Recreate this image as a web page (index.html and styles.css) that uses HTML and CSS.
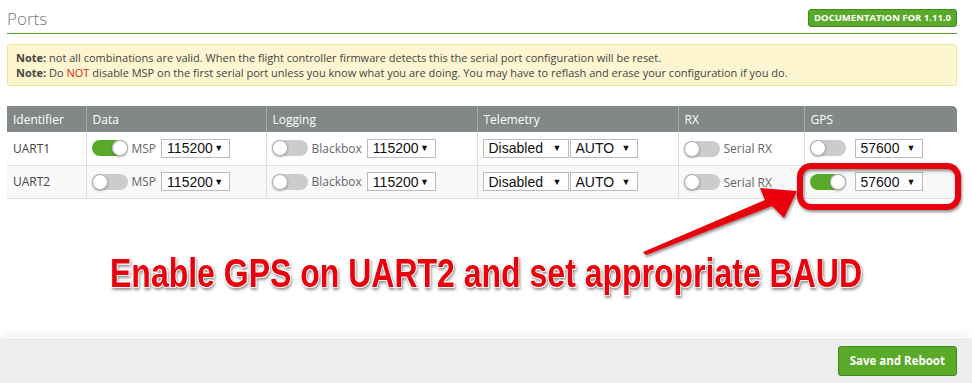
FILE: index.html
```html
<!DOCTYPE html>
<html lang="en">
<head>
  <meta charset="UTF-8">
  <title>Ports</title>
  <link rel="stylesheet" href="styles.css">
</head>
<body>
  <div class="content">
    <div class="tab-header">
      <h2>Ports</h2>
      <a class="doc-btn" href="#">Documentation for 1.11.0</a>
    </div>

    <div class="note">
      <p><b>Note:</b> not all combinations are valid. When the flight controller firmware detects this the serial port configuration will be reset.</p>
      <p><b>Note:</b> Do <span class="red">NOT</span> disable MSP on the first serial port unless you know what you are doing. You may have to reflash and erase your configuration if you do.</p>
    </div>

    <table class="ports">
      <thead>
        <tr>
          <th class="c-id">Identifier</th>
          <th class="c-data">Data</th>
          <th class="c-log">Logging</th>
          <th class="c-tel">Telemetry</th>
          <th class="c-rx">RX</th>
          <th class="c-gps">GPS</th>
        </tr>
      </thead>
      <tbody>
        <tr>
          <td>UART1</td>
          <td><span class="toggle on"></span><span class="lbl">MSP</span><span class="sel w69">115200</span></td>
          <td><span class="toggle"></span><span class="lbl">Blackbox</span><span class="sel w69">115200</span></td>
          <td><span class="sel w86">Disabled</span><span class="sel w68">AUTO</span></td>
          <td><span class="toggle"></span><span class="lbl">Serial RX</span></td>
          <td><span class="toggle"></span><span class="sel w68 gap">57600</span></td>
        </tr>
        <tr>
          <td>UART2</td>
          <td><span class="toggle"></span><span class="lbl">MSP</span><span class="sel w69">115200</span></td>
          <td><span class="toggle"></span><span class="lbl">Blackbox</span><span class="sel w69">115200</span></td>
          <td><span class="sel w86">Disabled</span><span class="sel w68">AUTO</span></td>
          <td><span class="toggle"></span><span class="lbl">Serial RX</span></td>
          <td><span class="toggle on"></span><span class="sel w68 gap">57600</span></td>
        </tr>
      </tbody>
    </table>
  </div>

  <div class="toolbar">
    <a class="save-btn" href="#">Save and Reboot</a>
  </div>

  <svg class="callout" width="972" height="383" viewBox="0 0 972 383">
    <defs>
      <filter id="shadow" x="-10%" y="-30%" width="120%" height="160%">
        <feDropShadow dx="1" dy="2" stdDeviation="1.5" flood-color="#000" flood-opacity="0.45"/>
      </filter>
    </defs>
    <rect x="800" y="166" width="158" height="41" rx="11" ry="11" fill="none" stroke="#e8000b" stroke-width="6" filter="url(#shadow)"/>
    <polygon points="643,252 765,200 760,188 797,191 784,218 772,206 646,255" fill="#e8000b" filter="url(#shadow)"/>
    <g filter="url(#shadow)">
      <text x="110" y="215.8" transform="scale(1,1.33)" textLength="752" lengthAdjust="spacingAndGlyphs" class="caption">Enable GPS on UART2 and set appropriate BAUD</text>
    </g>
  </svg>
</body>
</html>
```

FILE: styles.css
```css
* {
  margin: 0;
  padding: 0;
  box-sizing: border-box;
}

body {
  width: 972px;
  height: 383px;
  font-family: 'Open Sans', sans-serif;
  color: #333;
  background: #fff;
  display: flex;
  flex-direction: column;
  overflow: hidden;
  position: relative;
}

.content {
  flex: 1;
  padding: 0 15px 0 7px;
}

.tab-header {
  display: flex;
  justify-content: space-between;
  align-items: flex-start;
  height: 34px;
  border-bottom: 1px solid #59aa29;
  padding-top: 9px;
}

.tab-header h2 {
  font-weight: 300;
  font-size: 17px;
  color: #777;
  line-height: 18px;
  margin-top: 1px;
}

.doc-btn {
  display: block;
  background: #59aa29;
  border: 1px solid #3d8a1c;
  border-radius: 3px;
  color: #fff;
  font-size: 9.5px;
  font-weight: 700;
  text-transform: uppercase;
  text-decoration: none;
  line-height: 16px;
  padding: 0 5px;
}

.note {
  margin-top: 10px;
  background: #fef6d0;
  border: 1px solid #f2e29a;
  border-radius: 3px;
  padding: 6px 8px 5px;
  font-size: 11px;
  line-height: 14.5px;
  color: #444;
}

.red {
  color: #e2231a;
}

.ports {
  margin-top: 20px;
  width: 950px;
  border-collapse: collapse;
  table-layout: fixed;
  font-size: 12px;
}

.ports th {
  background: #828885;
  color: #fff;
  font-weight: 400;
  text-align: left;
  height: 26px;
  padding: 0 6px;
  border-left: 1px solid #a6aaa8;
}

.ports th:first-child {
  border-left: none;
}

.ports th:last-child {
  border-top-right-radius: 5px;
}

.c-id { width: 79px; }
.c-data { width: 180px; }
.c-log { width: 211px; }
.c-tel { width: 201px; }
.c-rx { width: 126px; }
.c-gps { width: 153px; }

.ports td {
  height: 33px;
  padding: 0 5px;
  border-left: 1px solid #ddd;
  border-bottom: 1px solid #ddd;
  white-space: nowrap;
  color: #444;
}

.ports td:first-child {
  border-left: none;
  padding-left: 6px;
}

.ports tbody tr:nth-child(2) td {
  background: #f9f9f9;
}

.toggle {
  display: inline-block;
  vertical-align: middle;
  width: 36px;
  height: 16px;
  border-radius: 8px;
  background: #ccc;
  position: relative;
}

.toggle::after {
  content: '';
  position: absolute;
  left: 0;
  top: 0;
  width: 16px;
  height: 16px;
  border-radius: 50%;
  background: #fff;
  box-shadow: 0 0 0 1px #aaa inset, 0 1px 2px rgba(0, 0, 0, 0.3);
}

.toggle.on {
  background: #59aa29;
}

.toggle.on::after {
  left: 20px;
}

.lbl {
  display: inline-block;
  vertical-align: middle;
  margin-left: 4px;
  color: #666;
}

.sel {
  display: inline-flex;
  align-items: center;
  justify-content: space-between;
  vertical-align: middle;
  height: 19px;
  border: 1px solid #bbb;
  background: #fff;
  font-family: 'Liberation Sans', Arial, sans-serif;
  font-size: 14px;
  color: #111;
  padding: 0 6px 0 5px;
  margin-left: 5px;
}

.sel::after {
  content: '\25BC';
  font-size: 9px;
  color: #111;
}

.w69 { width: 69px; }
.w86 { width: 86px; margin-left: 0; }
.w68 { width: 68px; }
.ports td .w86 + .w68 { margin-left: 1px; }
.gap { margin-left: 9px; }

.toolbar {
  height: 46px;
  background: #eee;
  border-top: 1px solid #fff;
  box-shadow: 0 -6px 8px -4px rgba(0, 0, 0, 0.08);
  display: flex;
  justify-content: flex-end;
  align-items: center;
  padding: 0 15px;
}

.save-btn {
  display: block;
  background: #59aa29;
  border: 1px solid #3d8a1c;
  border-radius: 3px;
  color: #fff;
  font-size: 11.5px;
  font-weight: 700;
  text-decoration: none;
  line-height: 28px;
  padding: 0 11px;
}

.callout {
  position: absolute;
  left: 0;
  top: 0;
  pointer-events: none;
}

.caption {
  font-family: 'Liberation Sans', Arial, sans-serif;
  font-weight: 700;
  font-size: 30px;
  fill: #e8000b;
  stroke: #fff;
  stroke-width: 1.3px;
  paint-order: stroke;
}
```
